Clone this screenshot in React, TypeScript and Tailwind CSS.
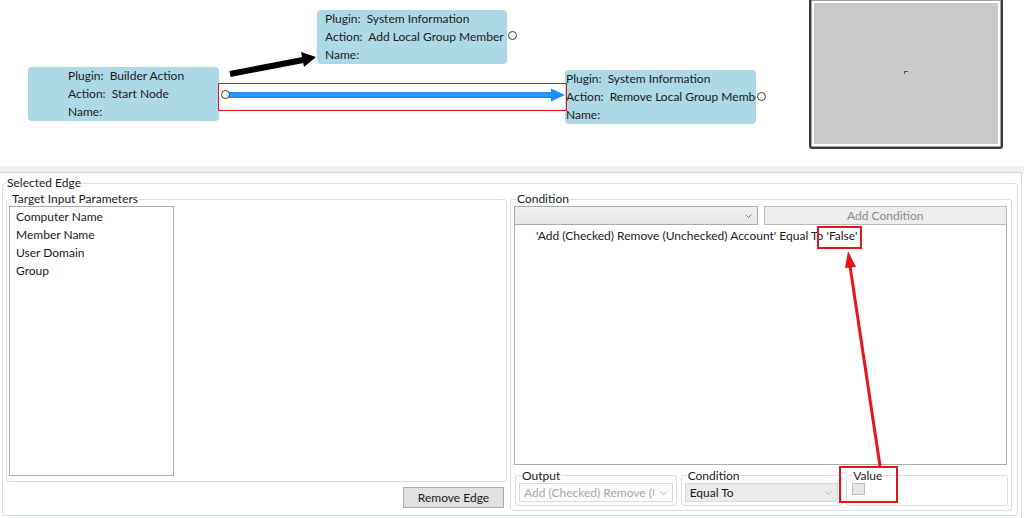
import React from 'react';

interface NodeInfo {
  pos: string;
  port: string;
  plugin: string;
  action: string;
}

const nodes: NodeInfo[] = [
  { pos: 'left-[28px] top-[67px] w-[191px] pl-[40px]', port: 'left-[221px] top-[90px]', plugin: 'Builder Action', action: 'Start Node' },
  { pos: 'left-[317px] top-[10px] w-[190px] pl-[8px]', port: 'left-[508px] top-[31px]', plugin: 'System Information', action: 'Add Local Group Member' },
  { pos: 'left-[565px] top-[70px] w-[191px] pl-[1px]', port: 'left-[757px] top-[92px]', plugin: 'System Information', action: 'Remove Local Group Member' },
];

const params = ['Computer Name', 'Member Name', 'User Domain', 'Group'];

const Chevron = ({ className }: { className: string }) => (
  <svg width="7" height="4" viewBox="0 0 7 4" className={className}>
    <path d="M0.5 0.5 L3.5 3.5 L6.5 0.5" fill="none" stroke="currentColor" strokeWidth="1" />
  </svg>
);

const FlowNode = ({ node }: { node: NodeInfo }) => (
  <>
    <div className={`absolute h-[54px] rounded-[4px] bg-[#add8e6] overflow-hidden whitespace-pre leading-[18px] ${node.pos}`}>
      <div>{'Plugin:  ' + node.plugin}</div>
      <div>{'Action:  ' + node.action}</div>
      <div>Name:</div>
    </div>
    <div className={`absolute w-[9px] h-[9px] rounded-full border-[1.5px] border-[#3c3c3c] bg-white ${node.port}`} />
  </>
);

export default function App() {
  return (
    <div className="relative w-[1024px] h-[518px] overflow-hidden bg-white text-[12px] text-[#1b1b1b] font-[Lato,'Noto_Sans',sans-serif]">
      {/* graph canvas */}
      <div className="relative h-[166px] bg-white">
        <svg className="absolute left-0 top-0" width="800" height="166">
          <line x1="230" y1="74" x2="303" y2="60" stroke="#000" strokeWidth="6" />
          <polygon points="316,57 304,67 301,52" fill="#000" />
          <line x1="228" y1="95" x2="552" y2="95" stroke="#1e8fff" strokeWidth="6" />
          <line x1="228" y1="95" x2="552" y2="95" stroke="#3a9dff" strokeWidth="1.5" />
          <polygon points="565,95 551,88.5 551,101.5" fill="#1e8fff" />
        </svg>
        {nodes.map((n) => (
          <FlowNode key={n.action} node={n} />
        ))}
        <div className="absolute left-[218px] top-[83px] w-[349px] h-[28px] border-[1.5px] border-[#e8141c]" />

        {/* minimap */}
        <div className="absolute left-[809px] top-[-2px] w-[194px] h-[151px] rounded-[3px] border-2 border-[#3a3a3a] bg-[#a3a3a3] p-[1px]">
          <div className="relative h-full border-2 border-white bg-[#c9c9c9]">
            <div className="absolute left-[90px] top-[68px] w-[4px] h-[3px] border-t border-l border-[#e8141c]" />
          </div>
        </div>
      </div>

      <div className="h-[6px] bg-[#f0f0f0]" />

      {/* edge panel */}
      <div className="w-[1022px] h-[346px] border-t border-r border-[#dadada] px-[2px]">
        <fieldset className="mt-[2px] h-[341px] w-[1016px] min-w-0 rounded-[3px] border border-[#d5dfe5]">
          <legend className="ml-[3px] px-[1px] leading-[16px]">Selected Edge</legend>
          <div className="flex gap-[3px] pl-[3px]">
            {/* left column */}
            <div className="flex w-[501px] flex-col">
              <fieldset className="h-[291px] min-w-0 rounded-[3px] border border-[#d5dfe5]">
                <legend className="ml-[4px] px-[1px] leading-[16px]">Target Input Parameters</legend>
                <div className="ml-[2px] mt-[-1px] h-[270px] w-[165px] border border-[#abadb3] bg-white pt-[1px] pl-[6px]">
                  {params.map((p) => (
                    <div key={p} className="leading-[18px]">{p}</div>
                  ))}
                </div>
              </fieldset>
              <div className="mt-[5px] flex justify-end pr-[3px]">
                <button className="h-[21px] w-[101px] border border-[#adadad] bg-[#e1e1e1] text-[12px] leading-[19px]">
                  Remove Edge
                </button>
              </div>
            </div>

            {/* right column */}
            <fieldset className="h-[320px] w-[502px] min-w-0 rounded-[3px] border border-[#d5dfe5]">
              <legend className="ml-[5px] px-[1px] leading-[16px]">Condition</legend>
              <div className="mt-[-1px] pl-[3px] pr-[4px]">
                <div className="grid grid-cols-2 gap-[6px]">
                  <div className="flex h-[19px] items-center justify-end border border-[#acacac] bg-gradient-to-b from-[#f0f0f0] to-[#e5e5e5] pr-[5px] text-[#7a7a7a]">
                    <Chevron className="" />
                  </div>
                  <div className="flex h-[19px] items-center justify-center border border-[#bcbcbc] bg-[#ededed] text-[#8c8c8c]">
                    Add Condition
                  </div>
                </div>
                <div className="h-[240px] border border-[#abadb3] border-t-0 bg-white pl-[21px] pt-[3px] leading-[16px] whitespace-pre">
                  {"'Add (Checked) Remove (Unchecked) Account' Equal To 'False'"}
                </div>
                <div className="ml-[1px] mr-[-1px] mt-[3px] grid grid-cols-3 gap-[4px]">
                  <fieldset className="h-[38px] min-w-0 rounded-[3px] border border-[#d5dfe5]">
                    <legend className="ml-[5px] px-[1px] leading-[15px]">Output</legend>
                    <div className="mx-[3px] flex h-[19px] items-center border border-[#d9d9d9] bg-[#fcfcfc] pl-[4px] pr-[5px] text-[#a8a8a8]">
                      <span className="min-w-0 flex-1 overflow-hidden whitespace-nowrap">Add (Checked) Remove (Unchecked) Account</span>
                      <Chevron className="ml-[6px] shrink-0 text-[#b4b4b4]" />
                    </div>
                  </fieldset>
                  <fieldset className="h-[38px] min-w-0 rounded-[3px] border border-[#d5dfe5]">
                    <legend className="ml-[5px] px-[1px] leading-[15px]">Condition</legend>
                    <div className="mx-[3px] flex h-[19px] items-center border border-[#d9d9d9] bg-[#ebebeb] pl-[4px] pr-[5px]">
                      <span className="min-w-0 flex-1">Equal To</span>
                      <Chevron className="shrink-0 text-[#b4b4b4]" />
                    </div>
                  </fieldset>
                  <fieldset className="h-[38px] min-w-0 rounded-[3px] border border-[#d5dfe5]">
                    <legend className="ml-[5px] px-[1px] leading-[15px]">Value</legend>
                    <div className="ml-[5px] h-[12px] w-[13px] border border-[#bcbcbc] bg-[#e6e6e6]" />
                  </fieldset>
                </div>
              </div>
            </fieldset>
          </div>
        </fieldset>
      </div>

      {/* annotations */}
      <div className="absolute left-[817px] top-[226px] w-[45px] h-[23px] border-2 border-[#e8141c]" />
      <div className="absolute left-[839px] top-[466px] w-[59px] h-[37px] border-2 border-[#e8141c]" />
      <svg className="absolute left-0 top-0 pointer-events-none" width="1024" height="518">
        <line x1="880" y1="466" x2="850" y2="266" stroke="#e8141c" strokeWidth="3" />
        <polygon points="848,251 856,267 845,268" fill="#e8141c" />
      </svg>
    </div>
  );
}
